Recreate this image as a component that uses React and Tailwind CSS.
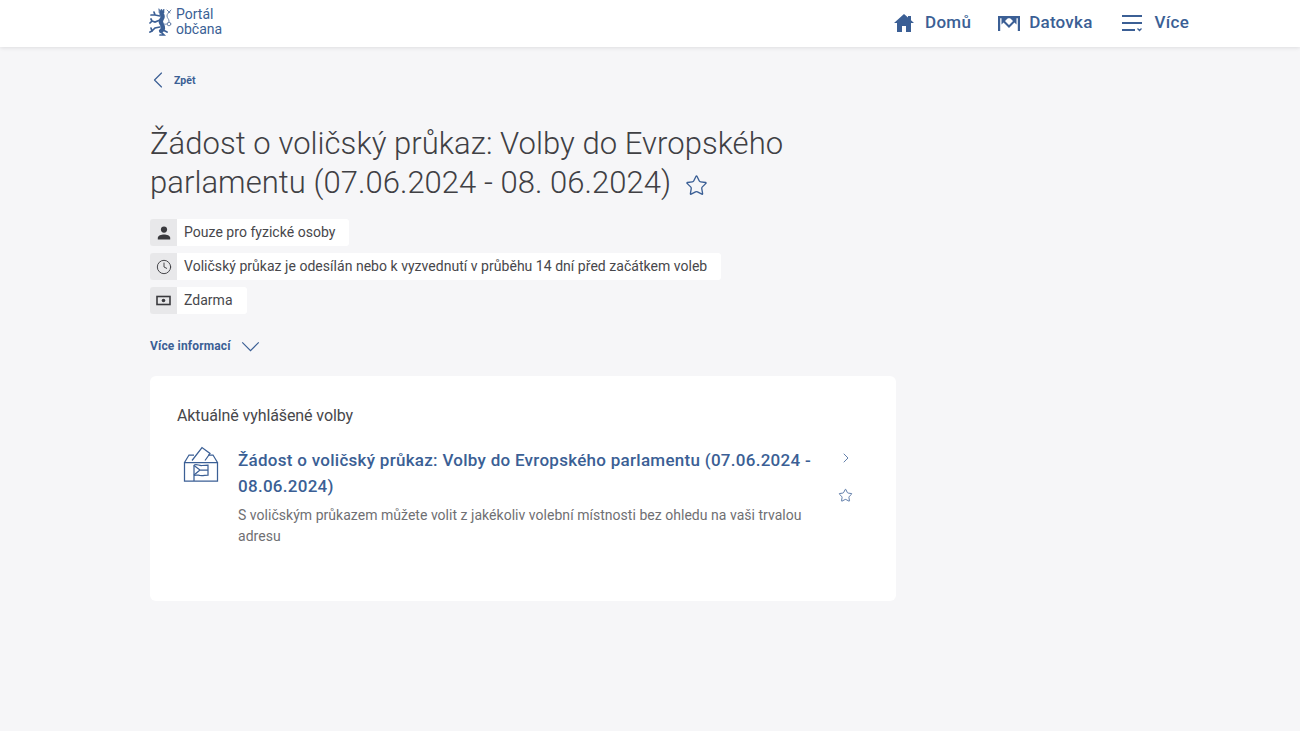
import { ChevronLeft, ChevronRight, Star, Clock } from "lucide-react";

const blue = "text-[#3b5f95]";

const Lion = () => (
  <svg width="24" height="29" viewBox="0 0 24 29" fill="none" stroke="#3b5f95" strokeLinecap="round">
    <path d="M10 1l1 2 1.5-2 1 2 1.5-2v4h-4.5z" fill="#3b5f95" strokeWidth="0.6" />
    <path d="M12.5 6c1.5 1 1.5 3 .5 4.5-1.5 2-1.5 4 0 6 1.5 2.5 1 5-1 6.5" strokeWidth="4.2" />
    <path d="M11 8L6 7M5 4l1 3-4 0M11 12l-5 2-3-1M2 11l1 2-2 2" strokeWidth="1.7" />
    <path d="M11 19l-5 1-3 3M2 20l1 3-2 1M12 24l3 3h-4M14 22l4 2" strokeWidth="1.7" />
    <path d="M15 16c3 1 5-1 5-3s-2-3-2-5 1-3 3-4M18 2l3 3M22 2l-3 3" stroke="#6f87ad" strokeWidth="1" />
    <circle cx="20" cy="16" r="1.8" stroke="#6f87ad" strokeWidth="1" />
  </svg>
);

const HomeIcon = () => (
  <svg width="22" height="20" viewBox="0 0 22 20" fill="#3b5f95">
    <path d="M11 1L1 10h3v9h5v-6h4v6h5v-9h3l-3-2.7V3h-3v1.6z" />
  </svg>
);

const MailIcon = () => (
  <svg width="22" height="16" viewBox="0 0 22 16" fill="#3b5f95">
    <path d="M0 16V1h22v15h-2.2V3.2H2.2V16z" />
    <path d="M3.5 3h6.500L3.500 9.500zM18.500 3H12l6.500 6.500z" />
    <path d="M5.500 6l5.500 5.500L16.500 6" fill="none" stroke="#3b5f95" strokeWidth="2" />
  </svg>
);

const MenuIcon = () => (
  <svg width="22" height="18" viewBox="0 0 22 18" fill="none" stroke="#3b5f95" strokeWidth="2.2">
    <path d="M1 2h20M1 9h20M1 16h13" />
    <path d="M16.5 14.5l2 2 2-2" strokeWidth="1.3" />
  </svg>
);

const PersonIcon = () => (
  <svg width="14" height="14" viewBox="0 0 14 14" fill="#3a3a3e">
    <circle cx="7" cy="3.6" r="3.1" />
    <path d="M0.8 13.5v-1.6c0-2.2 3.6-3.4 6.2-3.4s6.2 1.2 6.2 3.4v1.6z" />
  </svg>
);

const MoneyIcon = () => (
  <svg width="15" height="11" viewBox="0 0 15 11" fill="none">
    <rect x="1" y="1.5" width="13" height="8" stroke="#3a3a3e" strokeWidth="1.6" />
    <circle cx="7.5" cy="5.5" r="1.8" fill="#3a3a3e" />
  </svg>
);

const BallotIcon = () => (
  <svg width="36" height="36" viewBox="0 0 36 36" fill="none" stroke="#3b5f95" strokeWidth="1.25">
    <path d="M1.5 16.5L6 9h5M25 9h5l4.5 7.5" />
    <path d="M1.5 16.5h33V35h-33z" />
    <path d="M9 14.5L19 1.5l8 6-5 7" />
    <path d="M11 35V19" />
    <path d="M11 19c3-1.5 5 1 8 .5s3-.5 6-.5v10c-3 0-5 1-8 .5s-4-1-6 0" />
    <path d="M11 19.5l6 4.5-6 5M17 24h8" />
  </svg>
);

const InfoRow = ({ icon, children }) => (
  <div className="flex h-[27px]">
    <div className="flex w-[27px] items-center justify-center rounded-l-[3px] bg-[#e8e8ea]">{icon}</div>
    <div className="flex items-center rounded-r-[3px] bg-white pr-[14px] pl-[7px] text-[14px] tracking-[0.03px] text-[#47474b]">
      {children}
    </div>
  </div>
);

export default function App() {
  return (
    <div className="min-h-[731px] bg-[#f6f6f8] font-['Roboto',sans-serif]">
      <header className="h-[47px] bg-white shadow-[0_1px_4px_rgba(0,0,0,0.1)]">
        <div className="flex h-[44px] items-center justify-between pr-[111px] pl-[149px]">
          <a className="flex items-center gap-[3px]">
            <Lion />
            <span className={`text-[14px] leading-[15px] ${blue}`}>
              Portál
              <br />
              občana
            </span>
          </a>
          <nav className={`flex items-center gap-[27px] pt-[2px] text-[17px] font-medium tracking-[0.25px] ${blue}`}>
            <a className="flex items-center gap-[10px]">
              <HomeIcon />
              Domů
            </a>
            <a className="flex items-center gap-[9px]">
              <MailIcon />
              Datovka
            </a>
            <a className="ml-px flex items-center gap-[12px]">
              <MenuIcon />
              Více
            </a>
          </nav>
        </div>
      </header>

      <main className="pl-[150px]">
        <a className={`flex h-[67px] items-center gap-[2px] text-[10.5px] font-bold ${blue}`}>
          <ChevronLeft size={28} strokeWidth={1} className="-mt-[2px] -ml-[6px]" />
          Zpět
        </a>

        <h1 className="mt-[10px] w-[700px] text-[31px] leading-[39px] font-light tracking-[0.05px] text-[#404044]">
          Žádost o voličský průkaz: Volby do Evropského parlamentu (07.06.2024 - 08. 06.2024)
          <Star size={23} strokeWidth={1.4} className="ml-[14px] inline-block align-[-4px] text-[#3b5f95]" />
        </h1>

        <div className="mt-[17px] flex flex-col items-start gap-[7px]">
          <InfoRow icon={<PersonIcon />}>Pouze pro fyzické osoby</InfoRow>
          <InfoRow icon={<Clock size={16} strokeWidth={1.4} className="text-[#3a3a3e]" />}>
            Voličský průkaz je odesílán nebo k vyzvednutí v průběhu 14 dní před začátkem voleb
          </InfoRow>
          <InfoRow icon={<MoneyIcon />}>Zdarma</InfoRow>
        </div>

        <a className={`mt-[20px] flex h-[24px] items-center gap-[10px] text-[12px] font-bold tracking-[0.15px] ${blue}`}>
          Více informací
          <svg width="19" height="11" viewBox="0 0 20 12" fill="none" stroke="#3b5f95" strokeWidth="1.3">
            <path d="M1 1.5l9 9 9-9" />
          </svg>
        </a>

        <section className="mt-[18px] h-[225px] w-[746px] rounded-[6px] bg-white pt-[30px] pr-[38px] pl-[27px]">
          <h2 className="text-[16px] leading-[20px] tracking-[-0.1px] text-[#47474b]">Aktuálně vyhlášené volby</h2>
          <div className="mt-[20px] flex">
            <div className="w-[61px] shrink-0 pl-[6px]">
              <BallotIcon />
            </div>
            <div className="w-[576px] shrink-0 pt-[1px]">
              <h3 className={`text-[17px] leading-[26px] font-medium tracking-[0.28px] ${blue}`}>
                Žádost o voličský průkaz: Volby do Evropského parlamentu (07.06.2024 - 08.06.2024)
              </h3>
              <p className="mt-[6px] text-[14px] leading-[21px] tracking-[0.03px] text-[#6f6f73]">
                S voličským průkazem můžete volit z jakékoliv volební místnosti bez ohledu na vaši trvalou adresu
              </p>
            </div>
            <div className="ml-[23px] flex flex-col items-center gap-[22px] pt-[4px] text-[#3b5f95]">
              <ChevronRight size={16} strokeWidth={1.2} className="ml-[1px]" />
              <Star size={15} strokeWidth={1.3} />
            </div>
          </div>
        </section>
      </main>
    </div>
  );
}
